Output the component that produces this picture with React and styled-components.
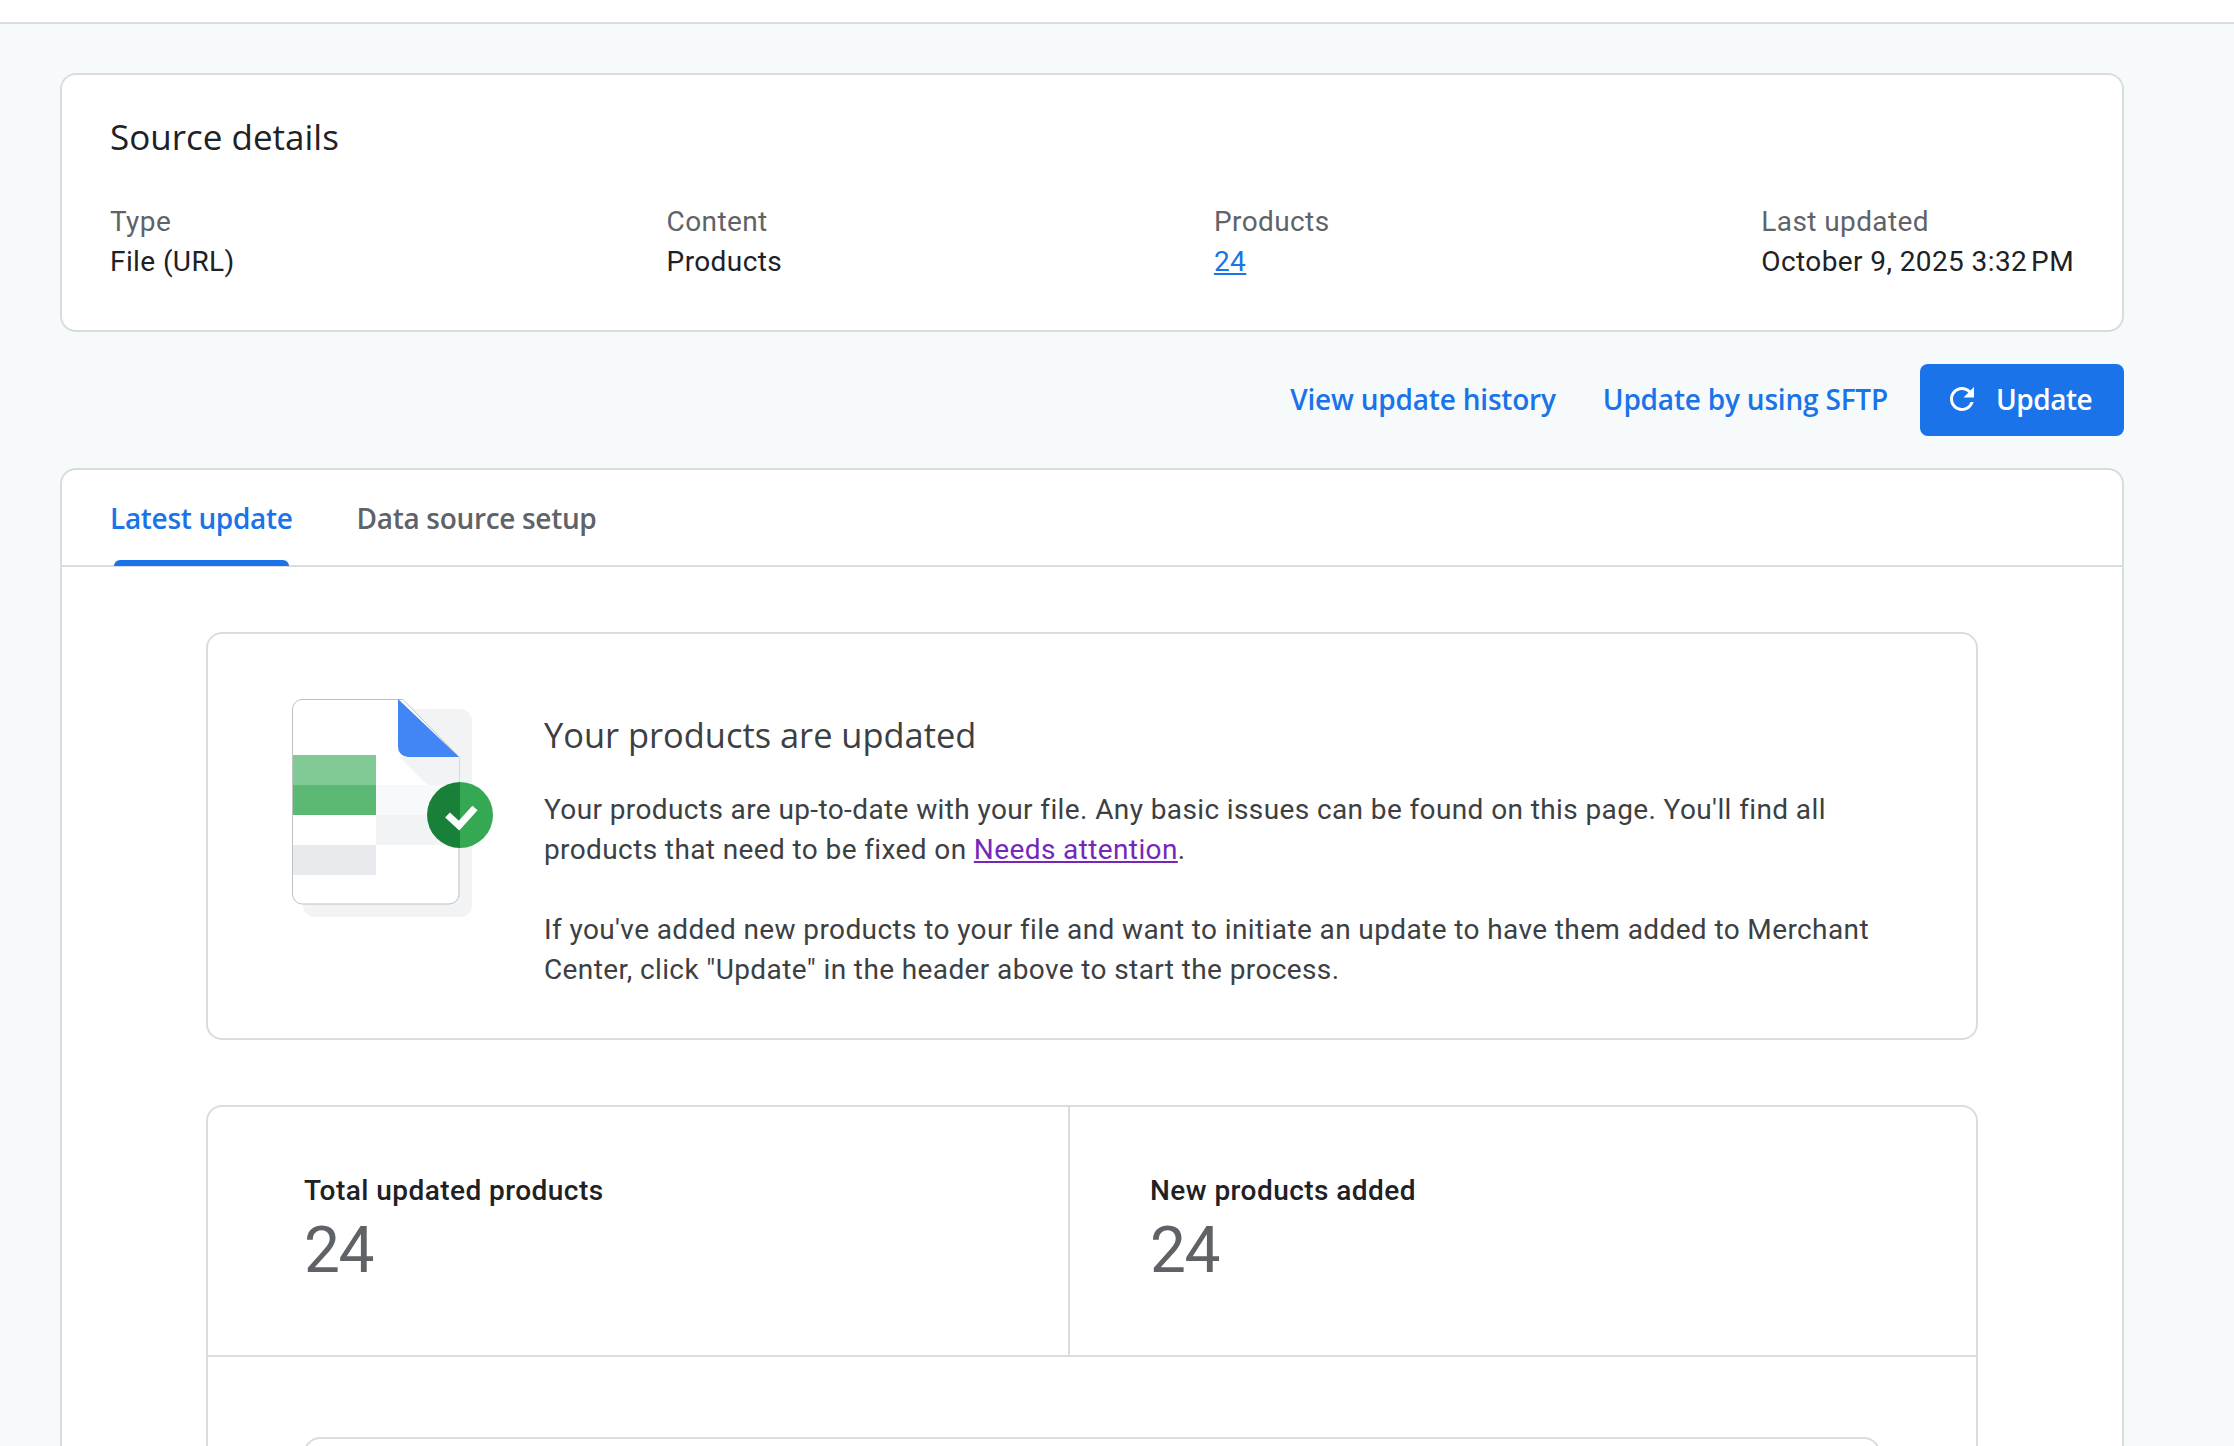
import styled, { createGlobalStyle } from "styled-components";

const GlobalStyle = createGlobalStyle`
  html, body {
    margin: 0;
    padding: 0;
    height: 1446px;
    overflow: hidden;
    background: #f6fafb;
    font-family: Roboto, "Liberation Sans", sans-serif;
  }
  * {
    box-sizing: border-box;
  }
`;

const headingFont = `"Open Sans", Roboto, sans-serif`;

// 맨 위의 흰색 바
const TopBar = styled.div`
  height: 24px;
  background: #fff;
  border-bottom: 2px solid #dadce0;
`;
const Page = styled.main`
  padding: 49px 110px 0 60px;
`;
const Card = styled.section`
  background: #fff;
  border: 2px solid #dadce0;
  border-radius: 16px;
`;
// Source details
const DetailsCard = styled(Card)`
  height: 259px;
  padding: 42px 48px 0 48px;
`;
const CardTitle = styled.h2`
  margin: 0 0 45px;
  font-family: ${headingFont};
  font-size: 35px;
  line-height: 40px;
  font-weight: 400;
  color: #202124;
`;
const DetailRow = styled.div`
  display: flex;
  justify-content: space-between;
`;
const Detail = styled.div`
  font-size: 28px;
  line-height: 40px;
  letter-spacing: 0.4px;
`;
const DetailLabel = styled.div`
  color: #5f6368;
`;
const DetailValue = styled.div`
  color: #202124;
`;
const DetailLink = styled.a`
  color: #1a73e8;
  text-decoration: underline;
`;
// 업데이트 버튼 줄
const Actions = styled.div`
  display: flex;
  align-items: center;
  justify-content: flex-end;
  gap: 47px;
  margin: 32px 0;
`;
const TextLink = styled.a`
  padding-bottom: 3px;
  font-family: ${headingFont};
  font-size: 28px;
  font-weight: 600;
  letter-spacing: -0.2px;
  color: #1a73e8;
`;
const UpdateButton = styled.button`
  display: flex;
  align-items: center;
  gap: 16px;
  width: 204px;
  height: 72px;
  margin-left: -15px;
  padding: 0 0 2px 24px;
  border: none;
  border-radius: 8px;
  background: #1a73e8;
  color: #fff;
  font-family: ${headingFont};
  font-size: 28px;
  font-weight: 600;
  letter-spacing: -0.5px;
`;
const MainCard = styled(Card)`
  padding-bottom: 200px;
`;
const Tabs = styled.div`
  display: flex;
  gap: 64px;
  height: 97px;
  padding: 0 48px;
  border-bottom: 2px solid #dadce0;
`;
const Tab = styled.div`
  position: relative;
  padding-top: 28px;
  font-family: ${headingFont};
  font-size: 28px;
  line-height: 40px;
  font-weight: 600;
  letter-spacing: -0.32px;
  color: ${(props) => (props.$active ? "#1a73e8" : "#5f6368")};
  ${(props) =>
    props.$active &&
    `&::after {
      content: "";
      position: absolute;
      left: 4px;
      right: 4px;
      bottom: -1px;
      height: 6px;
      border-radius: 6px 6px 0 0;
      background: #1a73e8;
    }`}
`;
const TabBody = styled.div`
  display: flex;
  flex-direction: column;
  gap: 65px;
  padding: 65px 144px 0;
`;
const InnerCard = styled(Card)``;
// 상태 안내
const Status = styled(InnerCard)`
  display: flex;
  height: 408px;
  padding: 64px 0 0 84px;
`;
const Illustration = styled.svg`
  flex: none;
  width: 202px;
  height: 225px;
  margin: 1px 50px 0 0;
`;
const StatusContent = styled.div`
  width: 1340px;
  padding-top: 13px;
`;
const StatusTitle = styled.h3`
  margin: 0 0 31px;
  font-family: ${headingFont};
  font-size: 34.4px;
  line-height: 48px;
  font-weight: 400;
  color: #3c4043;
`;
const StatusText = styled.p`
  margin: 0 0 40px;
  font-size: 28px;
  line-height: 40px;
  letter-spacing: 0.39px;
  color: #3c4043;
`;
const StatusLink = styled.a`
  color: #7627bb;
  text-decoration: underline;
`;
// 숫자 통계
const StatsCard = styled(InnerCard)``;
const StatsRow = styled.div`
  display: grid;
  grid-template-columns: 862px 1fr;
  height: 250px;
  border-bottom: 2px solid #dadce0;
`;
const Stat = styled.div`
  padding: ${(props) => (props.$first ? "64px 0 0 96px" : "64px 0 0 80px")};
  ${(props) => props.$first && "border-right: 2px solid #dadce0;"}
`;
const StatLabel = styled.div`
  font-size: 28px;
  line-height: 40px;
  font-weight: 500;
  letter-spacing: 0.45px;
  color: #202124;
`;
const StatValue = styled.div`
  font-size: 64px;
  line-height: 80px;
  letter-spacing: -1.5px;
  color: #5f6368;
`;
const StatsBottom = styled.div`
  padding: 80px 96px 0;
`;
const Nested = styled(InnerCard)`
  height: 200px;
`;

function FileIllustration() {
  return (
    <Illustration viewBox="0 0 202 225">
      <path d="M11 10H168a12 12 0 0 1 12 12V206a12 12 0 0 1-12 12H23a12 12 0 0 1-12-12Z" fill="#f1f3f4" />
      <path d="M10 .5H111L167 58V195a10 10 0 0 1-10 10H10A10 10 0 0 1 .5 195V10A10 10 0 0 1 10 .5Z" fill="#fff" stroke="#bdc1c6" strokeWidth="1" />
      <path d="M107 58H167V100H150Z" fill="#f1f3f4" />
      <rect x="84" y="86" width="82.5" height="30" fill="#f8f9fa" />
      <rect x="84" y="116" width="82.5" height="30" fill="#f1f3f4" />
      <rect x="1" y="56" width="83" height="30" fill="#81c995" />
      <rect x="1" y="86" width="83" height="30" fill="#5bb974" />
      <rect x="1" y="146" width="83" height="30" fill="#e8eaed" />
      <path d="M106 0 167 58H116a10 10 0 0 1-10-10Z" fill="#4285f4" />
      <path d="M168 83a33 33 0 0 0 0 66Z" fill="#188038" />
      <path d="M168 83a33 33 0 0 1 0 66Z" fill="#34a853" />
      <path d="M155.5 116 167 126.5 183 109" fill="none" stroke="#fff" strokeWidth="7" />
    </Illustration>
  );
}

export default function App() {
  return (
    <>
      <GlobalStyle />
      <TopBar />
      <Page>
        <DetailsCard>
          <CardTitle>Source details</CardTitle>
          <DetailRow>
            <Detail>
              <DetailLabel>Type</DetailLabel>
              <DetailValue>File (URL)</DetailValue>
            </Detail>
            <Detail>
              <DetailLabel>Content</DetailLabel>
              <DetailValue>Products</DetailValue>
            </Detail>
            <Detail>
              <DetailLabel>Products</DetailLabel>
              <DetailValue>
                <DetailLink>24</DetailLink>
              </DetailValue>
            </Detail>
            <Detail>
              <DetailLabel>Last updated</DetailLabel>
              <DetailValue>October 9, 2025 3:32{"\u202f"}PM</DetailValue>
            </Detail>
          </DetailRow>
        </DetailsCard>
        <Actions>
          <TextLink>View update history</TextLink>
          <TextLink>Update by using SFTP</TextLink>
          <UpdateButton>
            <svg width="36" height="36" viewBox="0 0 24 24" fill="#fff">
              <path d="M17.65 6.35C16.2 4.9 14.21 4 12 4c-4.42 0-7.99 3.58-7.99 8s3.57 8 7.99 8c3.73 0 6.84-2.55 7.73-6h-2.08c-.82 2.33-3.04 4-5.65 4-3.31 0-6-2.69-6-6s2.69-6 6-6c1.66 0 3.14.69 4.22 1.78L13 11h7V4l-2.35 2.35z" />
            </svg>
            Update
          </UpdateButton>
        </Actions>
        <MainCard>
          <Tabs>
            <Tab $active>Latest update</Tab>
            <Tab>Data source setup</Tab>
          </Tabs>
          <TabBody>
            <Status>
              <FileIllustration />
              <StatusContent>
                <StatusTitle>Your products are updated</StatusTitle>
                <StatusText>
                  Your products are up-to-date with your file. Any basic issues can be found on this page. You'll find all products that need to be fixed on <StatusLink>Needs attention</StatusLink>.
                </StatusText>
                <StatusText>
                  If you've added new products to your file and want to initiate an update to have them added to Merchant Center, click "Update" in the header above to start the process.
                </StatusText>
              </StatusContent>
            </Status>
            <StatsCard>
              <StatsRow>
                <Stat $first>
                  <StatLabel>Total updated products</StatLabel>
                  <StatValue>24</StatValue>
                </Stat>
                <Stat>
                  <StatLabel>New products added</StatLabel>
                  <StatValue>24</StatValue>
                </Stat>
              </StatsRow>
              <StatsBottom>
                <Nested />
              </StatsBottom>
            </StatsCard>
          </TabBody>
        </MainCard>
      </Page>
    </>
  );
}
